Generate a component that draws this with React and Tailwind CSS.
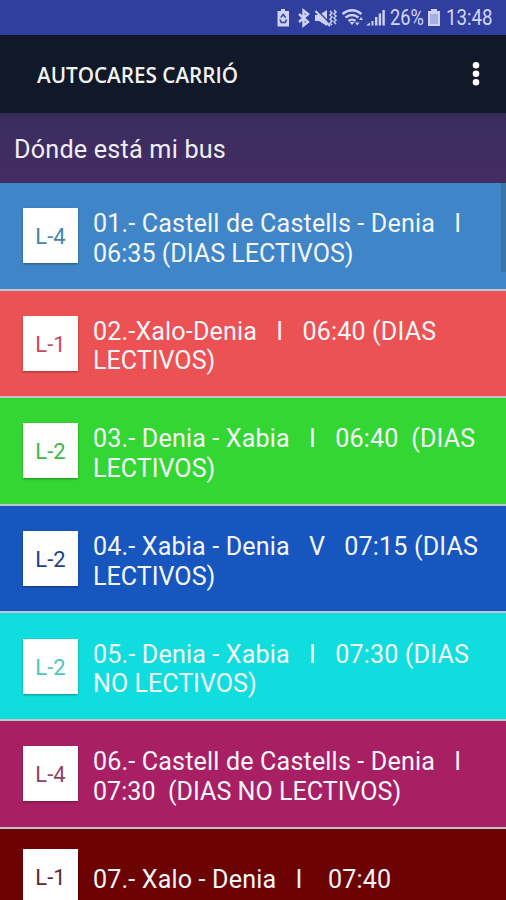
const routes = [
  { line: "L-4", text: "01.- Castell de Castells - Denia   I   06:35 (DIAS LECTIVOS)", bg: "bg-[#3f85c7]", color: "text-[#4583ad]" },
  { line: "L-1", text: "02.-Xalo-Denia   I   06:40 (DIAS LECTIVOS)", bg: "bg-[#ec5253]", color: "text-[#c8495c]" },
  { line: "L-2", text: "03.- Denia - Xabia   I   06:40  (DIAS LECTIVOS)", bg: "bg-[#34d634]", color: "text-[#3fb54b]" },
  { line: "L-2", text: "04.- Xabia - Denia   V   07:15 (DIAS LECTIVOS)", bg: "bg-[#1756bf]", color: "text-[#22418c]" },
  { line: "L-2", text: "05.- Denia - Xabia   I   07:30 (DIAS NO LECTIVOS)", bg: "bg-[#10dddd]", color: "text-[#4fc4bd]" },
  { line: "L-4", text: "06.- Castell de Castells - Denia   I   07:30  (DIAS NO LECTIVOS)", bg: "bg-[#a82063]", color: "text-[#96415f]" },
  { line: "L-1", text: "07.- Xalo - Denia   I    07:40", bg: "bg-[#6d0202]", color: "text-[#5c2a30]" },
];

const StatusIcons = () => (
  <svg width="108" height="20" viewBox="0 0 108 20" fill="#cdd3f6">
    {/* Battery saver */}
    <path d="M4 1h4v2h4v15.500H.5V3H4z" />
    <path d="M3.800 9.500 6.200 6.500l2.400 3M9.500 11.500l-1.200 3H4.200l-1.200-3" fill="none" stroke="#303f9f" strokeWidth="1.500" />
    {/* Bluetooth */}
    <path d="M22 6 31 14l-4.500 3.500v-15l4.500 3.500-9 8" fill="none" stroke="#cdd3f6" strokeWidth="2.400" />
    {/* Muted with vibration */}
    <path d="M38 7h4l8-5v16l-8-5h-4z" />
    <path d="M40.500 2.500 54 16.500" stroke="#303f9f" strokeWidth="1.500" />
    <path d="M38.500 3 53 18" stroke="#cdd3f6" strokeWidth="2" />
    <path d="m53 3 2 2-2 2 2 2-2 2 2 2-2 2 2 2M57 2l2 2-2 2 2 2-2 2 2 2-2 2 2 2" fill="none" stroke="#cdd3f6" strokeWidth="1.500" />
    {/* Wifi */}
    <path d="M65.500 6Q75-1.500 84.500 6M68.500 9.500q6.500-5 13 0M71.500 13q3.500-2.800 7 0" fill="none" stroke="#cdd3f6" strokeWidth="2.300" />
    <path d="M72.500 14h5l-2.500 3zM78 14.500h4.500l-2.200 3zM82 12l2-3 2 3z" />
    {/* Signal */}
    <path d="M89 17.500l4-3v3zM94.500 13h2v4.500h-2zM98 9h2.400v8.500H98zM101.700 5.500h2.400v12h-2.400zM105.400 2h2.400v15.500h-2.400z" />
  </svg>
);

const StatusBar = () => (
  <div className="flex h-[35px] shrink-0 items-center bg-[#303f9f] pl-[277px] text-[21.5px] leading-none text-[#d0d6f7]">
    <StatusIcons />
    <span className="ml-[5px] w-[35px] whitespace-nowrap">
      <span className="inline-block origin-left scale-x-[0.85]">26%</span>
    </span>
    <svg className="ml-[2px]" width="14" height="19" viewBox="0 0 14 19">
      <path d="M4 1h6v2h3v15H1V3h3z" fill="#cdd3f6" />
      <path d="M3 6h8v10H3z" fill="#a5afe2" />
    </svg>
    <span className="ml-[5px] whitespace-nowrap">
      <span className="inline-block origin-left scale-x-[0.87]">13:48</span>
    </span>
  </div>
);

const Header = () => (
  <header className="flex h-[78px] shrink-0 items-center justify-between bg-[#111827] pr-[26px] pl-[37px]">
    <h1 className="pt-[4px] font-['Open_Sans'] text-[20.7px] font-semibold text-[#f1f2f2]">
      AUTOCARES CARRIÓ
    </h1>
    <svg width="8" height="26" viewBox="0 0 8 26" fill="#fff">
      <circle cx="4" cy="4.300" r="3.300" />
      <circle cx="4" cy="12.800" r="3.300" />
      <circle cx="4" cy="21.300" r="3.300" />
    </svg>
  </header>
);

const RouteRow = ({ route }) => (
  <li
    className={`flex items-center border-b-2 border-[#c0c4cc] py-[20.3px] pl-[23px] ${route.bg}`}
  >
    <div
      className={`flex size-[55px] shrink-0 items-center justify-center bg-white pt-[2px] text-[22px] shadow-[0_1px_2px_rgba(0,0,0,0.35)] ${route.color}`}
    >
      {route.line}
    </div>
    <p className="ml-[15px] w-[395px] pt-[6px] text-[25.1px] leading-[29.500px] whitespace-pre-wrap text-[#f4f6fa] first-line:tracking-[0.16px]">
      {route.text}
    </p>
  </li>
);

const App = () => {
  return (
    <div className="flex h-[900px] w-[506px] flex-col overflow-hidden font-['Roboto',sans-serif]">
      <StatusBar />
      <Header />
      <div className="flex h-[70px] shrink-0 items-center bg-linear-to-b from-[#352c55] via-[#3c2d60] via-15% to-[#432c61] pt-[4px] pl-[14px] text-[25.2px] tracking-[0.2px] text-[#f1eff6]">
        Dónde está mi bus
      </div>
      <div className="relative">
        <ul>
          {routes.map((route) => (
            <RouteRow key={route.text} route={route} />
          ))}
        </ul>
        {/* Scrollbar */}
        <div className="absolute top-0 right-0 h-[89px] w-[5px] bg-[#3a76aa]" />
      </div>
    </div>
  );
};

export default App;
